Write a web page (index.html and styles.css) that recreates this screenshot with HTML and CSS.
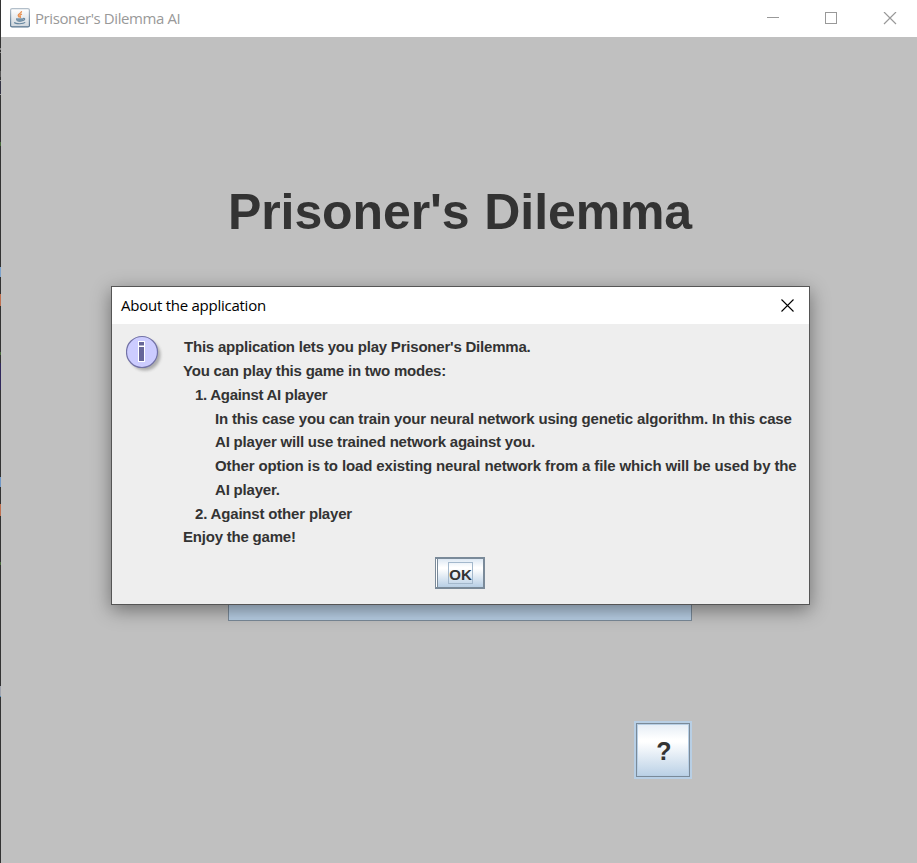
FILE: index.html
```html
<!DOCTYPE html>
<html lang="en">
<head>
<meta charset="utf-8">
<title>Prisoner's Dilemma AI</title>
<link rel="stylesheet" href="styles.css">
</head>
<body>
<div class="window">
  <header class="titlebar">
    <svg class="app-icon" width="20" height="20" viewBox="0 0 20 20">
      <defs><linearGradient id="ig" x1="0" y1="0" x2="0" y2="1"><stop offset="0" stop-color="#fff"/><stop offset="1" stop-color="#cfd6dc"/></linearGradient>
      <linearGradient id="ib" x1="0" y1="0" x2="0" y2="1"><stop offset="0" stop-color="#b3bfca"/><stop offset="1" stop-color="#55738e"/></linearGradient></defs>
      <rect x=".6" y=".6" width="18.8" height="18.3" rx="1.5" fill="url(#ig)" stroke="url(#ib)" stroke-width="1.2"/>
      <path d="M11.5 3.2c.4 1.800-3.500 2.700-3.300 4.300.1.800 1 1.300 1.200 2M12 6.200c-1.600.4-2.700 1.200-1.800 2.200.5.600.2 1-.3 1.400" fill="none" stroke="#e9904f" stroke-width="1.300"/>
      <path d="M6 10.300h7.300v1.200c0 1.300-1.300 2.400-3.500 2.400S6.300 12.800 6 11.500z" fill="#7895ab"/>
      <path d="M13 10.500c2.300-.7 2.500 1.700-.6 2.100M4.200 14.500c1.500 1.600 9.200 1.600 11-.1" fill="none" stroke="#66869f" stroke-width="1.100"/>
    </svg>
    <span class="app-title">Prisoner's Dilemma AI</span>
    <svg class="controls" width="130" height="13" viewBox="0 0 130 13" fill="none" stroke="#999">
      <path d="M0 5.500h12"/><path d="M117 0l12 12m0-12l-12 12" stroke-width="1.200"/><rect x="58.500" y=".5" width="11" height="11"/>
    </svg>
  </header>
  <main class="content">
    <h1>Prisoner's Dilemma</h1>
    <div class="menu-button"></div>
    <button class="help">?</button>
  </main>
</div>
<section class="dialog">
  <header class="dialog-bar">
    <span class="dialog-title">About the application</span>
    <svg width="13" height="13" viewBox="0 0 13 13" stroke="#000" stroke-width="1.100"><path d="M.5.500l12 12m0-12l-12 12"/></svg>
  </header>
  <div class="dialog-body">
    <svg class="info" width="40" height="42" viewBox="0 0 40 42">
      <defs><filter id="sh" x="-30%" y="-30%" width="160%" height="160%"><feGaussianBlur stdDeviation="1.500"/></filter></defs>
      <circle cx="19" cy="20" r="15.500" fill="#888" opacity=".65" filter="url(#sh)"/>
      <circle cx="16" cy="17" r="15.500" fill="#ccccff" stroke="#7272a6" stroke-width="1.200"/>
      <path d="M12 6h7v6h-7zM12 11h7v16h-7z" fill="#fff"/>
      <path d="M13 7h5v3.500h-5zM13 12h5v14h-5z" fill="#666699"/>
    </svg>
    <div class="message">
      <p class="first">This application lets you play Prisoner's Dilemma.</p>
      <p>You can play this game in two modes:</p>
      <p class="item against-ai">1. Against AI player</p>
      <p class="detail">In this case you can train your neural network using genetic algorithm. In this case<br><span class="tight">AI player will use trained network against you.</span></p>
      <p class="detail load">Other option is to load existing neural network from a file which will be used by the<br><span class="tight">AI player.</span></p>
      <p class="item">2. Against other player</p>
      <p>Enjoy the game!</p>
    </div>
  </div>
  <div class="actions"><button class="ok"><span>OK</span></button></div>
</section>
</body>
</html>
```

FILE: styles.css
```css
* { box-sizing: border-box; }
body { margin: 0; width: 917px; height: 863px; overflow: hidden; position: relative; font-family: "Liberation Sans", Arial, sans-serif; color: #333; }
.window {
  height: 863px;
  padding-left: 1px;
  display: flex;
  flex-direction: column;
  background: linear-gradient(#333 48px, #888 48px 50px, #333 50px 52px, #888 52px 53px, #333 53px 71px, #555 71px 77px, #333 77px 80px, #999 80px 81px, #334 81px 94px, #999 94px 95px, #333 95px 142px, #466b3a 142px 146px, #333 146px 267px, #7da3cd 267px 277px, #333 277px 294px, #c07050 294px 306px, #333 306px 352px, #466b3a 352px 355px, #333 355px 363px, #30285c 363px 390px, #333 390px 477px, #7098c8 477px 487px, #333 487px 504px, #c07050 504px 516px, #333 516px 562px, #466b3a 562px 565px, #333 565px 686px, #a0a4ae 686px 696px, #4787b8 696px 697px, #333 697px);
}
.titlebar { height: 37px; background: #fff; display: flex; align-items: center; padding: 0 20px 0 9px; }
.app-icon { flex: none; margin-top: -2px; }
.app-title { font: 15px/20px "Open Sans", sans-serif; color: #999; margin: -2px 0 0 5px; letter-spacing: -.4px; }
.controls { margin-left: auto; margin-top: -1px; }
.content { flex: 1; background: #c0c0c0; padding: 146px 225px 0 227px; display: flex; flex-direction: column; }
h1 { margin: 0; font-size: 50px; line-height: 58px; white-space: nowrap; letter-spacing: -.1px; word-spacing: 1px; }
.menu-button { margin-top: 320px; height: 60px; width: 464px; border: 1px solid #7a8a99; background: #b8cfe5; }
.help {
  align-self: flex-end; margin-top: 100px; width: 58px; height: 58px; padding: 2px 0 0 2px;
  border: 2px solid #b8cfe5; outline: 0; color: #333; font: bold 25px "Liberation Sans", sans-serif;
  background: linear-gradient(#e3ecf5, #fff 30%, #fff 35%, #b8cfe5); box-shadow: inset 0 0 0 1px #7a8a99, inset 0 0 0 2px #b8cfe5;
}
.dialog { position: absolute; left: 111px; top: 286px; width: 699px; height: 319px; border: 1px solid #555; background: #eee; box-shadow: 0 5px 18px rgba(0,0,0,.42); }
.dialog-bar { height: 37px; background: #fff; display: flex; align-items: center; justify-content: space-between; padding: 0 15px 0 9px; }
.dialog-title { font: 15px/20px "Open Sans", sans-serif; color: #000; letter-spacing: -.25px; margin-top: -2px; }
.dialog-body { display: flex; height: 226px; padding: 11px 0 0 14px; }
.info { flex: none; margin-right: 17px; }
.message { padding-top: .3px; font-weight: bold; font-size: 15px; line-height: 23.75px; letter-spacing: -.21px; white-space: nowrap; }
.message p { margin: 0; }
.message .first { padding-left: 1px; }
.message .item { padding-left: 12px; letter-spacing: -.18px; }
.message .against-ai { letter-spacing: -.29px; }
.message .detail { padding-left: 32px; letter-spacing: -.16px; }
.message .load { letter-spacing: -.12px; }
.message .tight { letter-spacing: -.2px; }
.actions { display: flex; justify-content: center; padding: 7px 2px 0 0; }
.ok { width: 50px; height: 32px; padding: 0; display: flex; align-items: center; justify-content: center; border: 2px solid #7a8a99; border-left-width: 1px; color: #333; font: bold 15px "Liberation Sans", sans-serif; background: linear-gradient(#dde8f3, #fff 30%, #fff 35%, #b8cfe5); box-shadow: inset 1px 0 #fff, inset 2px 0 #7a8a99; }
.ok span { width: 25px; height: 22px; line-height: 23px; border: 1px solid #a3b8cc; margin-left: 3px; }
```
